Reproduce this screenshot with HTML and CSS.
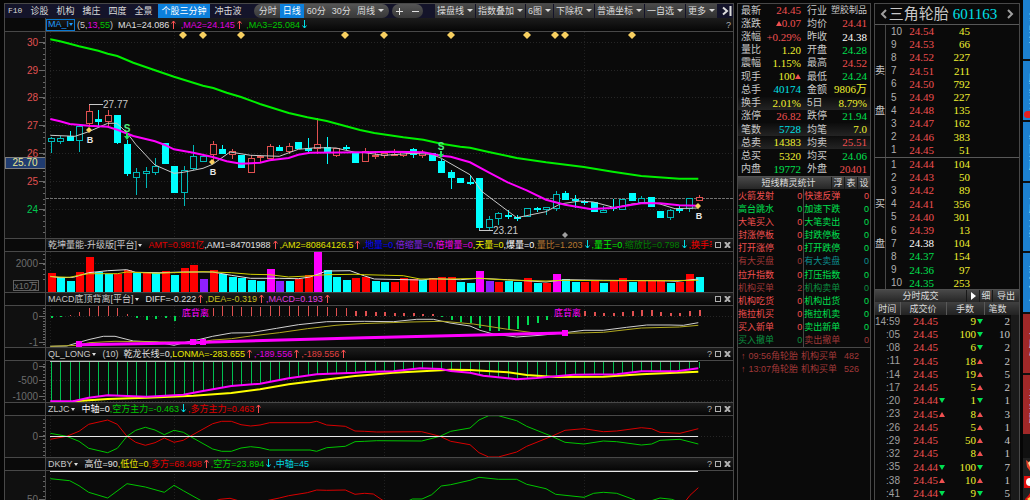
FILE: index.html
```html
<!DOCTYPE html>
<html lang="zh-CN">
<head>
<meta charset="utf-8">
<title>三角轮胎 601163</title>
<link rel="stylesheet" href="styles.css">
</head>
<body>
<div class="app">
  <main class="charts">
    <nav class="toolbar">
      <div class="tools">
        <button class="tool">F10</button>
        <button class="tool">诊股</button>
        <button class="tool">机构</button>
        <button class="tool">擒庄</button>
        <button class="tool">四度</button>
        <button class="tool">全景</button>
        <button class="tool tool-on">个股三分钟</button>
        <button class="tool">冲击波</button>
      </div>
      <div class="pill periods">
        <button class="period">分时</button>
        <button class="period period-on">日线</button>
        <button class="period">60分</button>
        <button class="period">30分</button>
        <button class="period">周线<i class="caret"></i></button>
      </div>
      <div class="pill zoomer">
        <button class="sign" aria-label="放大"><svg width="7" height="7"><path d="M0 3.5H7M3.5 0V7"/></svg></button>
        <button class="sign" aria-label="缩小"><svg width="7" height="7"><path d="M0 3.5H7"/></svg></button>
      </div>
      <div class="menus">
        <button class="menu">操盘线<i class="caret"></i></button>
        <button class="menu">指数叠加<i class="caret"></i></button>
        <button class="menu">6图<i class="caret"></i></button>
        <button class="menu">下除权<i class="caret"></i></button>
        <button class="menu">普通坐标<i class="caret"></i></button>
        <button class="menu">一自选<i class="caret"></i></button>
        <button class="menu">更多<i class="caret"></i></button>
      </div>
      <button class="last" aria-label="最后"><svg width="10" height="10"><path d="M1 1.500L5 5L1 8.500M8.500 0V10"/></svg></button>
    </nav>
    <div id="panels" class="panels"></div>
  </main>

  <section class="quote">
    <table class="stats"><tbody id="stats"></tbody></table>
    <div class="bar">
      <span class="bar-title">短线精灵统计</span>
      <button>浮</button><button>表</button><button>设</button>
    </div>
    <table class="alerts"><tbody id="alerts"></tbody></table>
    <ul class="log">
      <li>↑<span>09:56角轮胎</span><span>机构买单</span><b>482</b></li>
      <li>↑<span>13:07角轮胎</span><span>机构买单</span><b>526</b></li>
    </ul>
  </section>

  <section class="depth">
    <header class="stock">
      <button aria-label="上一只"><svg width="7" height="10"><path d="M6 1L2 5L6 9"/></svg></button>
      <h1>三角轮胎 <span>601163</span></h1>
      <button aria-label="下一只"><svg width="7" height="10"><path d="M1 1L5 5L1 9"/></svg></button>
    </header>
    <div class="book">
      <div class="side-name"><span>卖</span><span>盘</span></div>
      <table class="levels"><tbody id="asks"></tbody></table>
    </div>
    <div class="book book-buy">
      <div class="side-name"><span>买</span><span>盘</span></div>
      <table class="levels"><tbody id="bids"></tbody></table>
    </div>
    <div class="bar">
      <span class="bar-title">分时成交</span>
      <button aria-label="播放"><svg width="5" height="8"><path d="M0 0L5 4L0 8Z" fill="#fff"/></svg></button>
      <button>细</button><button class="wide">导出</button>
    </div>
    <div class="ticks">
      <table>
        <colgroup><col class="c-time"><col class="c-price"><col class="c-vol"><col class="c-num"></colgroup>
        <thead><tr><th>时间</th><th>成交价</th><th>手数</th><th>笔数</th></tr></thead>
        <tbody id="ticks"></tbody>
      </table>
    </div>
  </section>

  <aside class="dock">
    <button class="d58">实战培训</button>
    <button class="d58 badge">股友交流</button>
    <button class="d58">智能选股</button>
    <button class="d68">个股三分钟</button>
    <button class="d58">软件使用</button>
    <button class="d58 hot">个股心</button>
    <button class="d58 hot">主力追踪</button>
    <div class="dock-icons">
      <svg width="7" height="14"><path d="M3 2L7 5V13L4 9Z" fill="#e8402a"/><path d="M5 5L7 3V9Z" fill="#ffe0a0"/></svg>
      <svg width="7" height="14"><rect x="1" y="1" width="6" height="12" fill="#e01010"/><circle cx="7" cy="7" r="4" fill="#fff"/></svg>
      <svg width="7" height="14"><path d="M2 7L5 4L7 1V12L3 11Z" fill="#e01010"/><path d="M4 7L7 5V9Z" fill="#ffd24a"/></svg>
    </div>
  </aside>
</div>
<script src="app.js"></script>
</body>
</html>
```

FILE: styles.css
```css
* { box-sizing: border-box; }
body {
  margin: 0;
  background: #050505;
  color: #c8c8c8;
  font-family: "Liberation Sans", "Noto Sans CJK SC", sans-serif;
  font-size: 9px;
  line-height: 12px;
}
button {
  margin: 0; padding: 0; border: 0;
  background: none; color: inherit;
  font: inherit; white-space: nowrap; cursor: pointer;
}
table { border-collapse: collapse; border-spacing: 0; width: 100%; }
td, th { padding: 0; font-weight: normal; white-space: nowrap; }
svg { display: block; }

.app {
  display: grid;
  grid-template-columns: minmax(0, 1fr) 134px 146px 7px;
  column-gap: 3px;
  height: 100vh;
  padding-left: 4px;
  overflow: hidden;
}
.charts, .quote, .depth {
  margin-top: 3px;
  border: 1px solid #484848;
  border-bottom: 0;
  background: #0a0a0a;
  overflow: hidden;
}

.toolbar {
  display: flex; align-items: stretch;
  height: 14px;
  background: #14142a;
  color: #dcdcdc;
}
.tools { display: flex; margin-right: auto; }
.tool { padding: 0 4px; }
.tool:first-child { padding-left: 3px; font-family: "Liberation Mono", monospace; font-size: 8px; }
.tool-on { background: #0c80dc; color: #fff; margin: 0 1px 0 2px; padding: 0 3px; }
.pill { display: flex; border-radius: 7px; background: linear-gradient(#555, #383838); }
.periods { overflow: hidden; margin-right: 3px; }
.period { padding: 0 3px; }
.period:first-child { padding-left: 5px; }
.period:last-child { padding-right: 5px; }
.period-on { background: #0c80dc; color: #fff; }
.zoomer { align-items: center; gap: 9px; padding: 0 4px; }
.sign path { stroke: #e0e0e0; stroke-width: 1; }
.menus { display: flex; gap: 1px; margin: 0 4px 0 12px; }
.menu { padding: 0 2px; background: linear-gradient(#4a4a4a, #303030); }
.caret {
  display: inline-block; vertical-align: 2px;
  margin-left: 3px;
  border: 3px solid transparent; border-top-color: #ddd; border-bottom: 0;
}
.last { padding: 0 1px; }
.last path { fill: none; stroke: #ddd; stroke-width: 2; }

.head { display: flex; height: 14px; border: 1px solid #484848; border-width: 1px 0; }
.head-pad { flex: none; width: 41px; border-right: 1px solid #484848; }
.head-main {
  flex: 1; min-width: 0; display: flex; align-items: center;
  background: linear-gradient(#1c1c1c, #060606);
  padding-left: 2px;
}
.head-first { border-top: 0; }
.head-first .head-main { padding-left: 0; }
.legend { flex: 1; min-width: 0; display: flex; overflow: hidden; white-space: pre; }
.legend .caret { align-self: center; margin: 0 2px 0 1px; border-width: 3px 2px 0; }
.legend svg { flex: none; margin: 1px 2px 0 2px; }
.name-box { border: 1px solid #0a78d0; color: #1e9bff; padding: 0 1px; margin-right: 2px; display: flex; line-height: 9px; }
.name-box .caret { margin: 0; border-top-color: #1e9bff; }
.wins { flex: none; display: flex; gap: 3px; align-items: center; padding: 0 2px 0 3px; color: #b0b0b0; }
.wins svg path, .wins svg rect { fill: none; stroke: #b0b0b0; }
.plot { display: flex; }
.axis { flex: none; width: 41px; border-right: 1px solid #484848; background: #101010; }
.canvas { flex: 1; min-width: 0; }
.plot svg { overflow: hidden; shape-rendering: crispEdges; }
.plot polyline, .plot path { shape-rendering: auto; }
.plot text { font-family: "Liberation Sans", "Noto Sans CJK SC", sans-serif; font-size: 10px; }
.plot .note { font-size: 9px; }

.quote .stats { height: 172px; font-size: 10px; line-height: 13px; }
.stats td:nth-child(odd) { width: 26px; padding-left: 3px; line-height: 12px; }
.stats td:nth-child(even) { width: 40px; padding-right: 3px; text-align: right; }
.num { font-family: "Liberation Serif", "Noto Sans CJK SC", serif; font-size: 11px; line-height: 13px; }
.stats .small { font-size: 9px; padding-right: 3px; }
.stats .lit { background: linear-gradient(#0c0c0c, #242424); }

.bar {
  display: flex; height: 13px;
  background: linear-gradient(#484848, #262626);
  border-top: 1px solid #505050;
  color: #dcdcdc;
}
.bar-title { flex: 1; text-align: center; }
.bar button { width: 13px; border-left: 1px solid #181818; display: flex; align-items: center; justify-content: center; }
.quote .bar-title { text-indent: 8px; }
.bar .wide { width: 27px; }

.alerts { height: 159px; border-bottom: 1px solid #484848; }
.alerts td:nth-child(even) { text-align: right; padding-right: 1px; width: 28px; }
.alerts td:nth-child(2) { border-right: 1px solid #484848; }
.log { margin: 2px 0 0; padding: 0 3px; list-style: none; color: #a03838; line-height: 13px; }
.log li { display: flex; gap: 3px; }
.log b { font-weight: normal; margin-left: 4px; }

.r { color: #f05050; }
.g { color: #00e050; }
.y { color: #f0f030; }
.c { color: #00e0e8; }
.w { color: #fff; }
.s { color: #c8c8c8; }
.dr { color: #a03838; }
.dg { color: #0a9040; }
.dc { color: #0a9090; }

.stock {
  display: flex; align-items: center; justify-content: space-between;
  height: 21px; padding: 0 5px;
  border-bottom: 1px solid #585858;
}
.stock h1 { margin: 0; padding-right: 8px; font-size: 15px; line-height: 20px; font-weight: normal; }
.stock h1 span { color: #00e0e8; font-family: "Liberation Serif", serif; }
.stock path { fill: none; stroke: #a0a0a0; stroke-width: 2; }
.book { display: flex; height: 132px; }
.book-buy { border-top: 1px solid #585858; }
.side-name {
  width: 11px; border-right: 1px solid #484848;
  display: flex; flex-direction: column; justify-content: center; gap: 28px;
  font-size: 10px;
}
.levels { width: 84px; height: 132px; table-layout: fixed; }
.levels td { text-align: right; }
.levels td:first-child { text-align: left; padding-left: 5px; width: 18px; font-size: 10px; color: #b0b0b0; }
.levels td:nth-child(2) { width: 30px; }
.ticks { border-right: 8px solid #1a1a1a; }
.ticks table { table-layout: fixed; width: 144px; }
.c-time { width: 25px; }
.c-price { width: 46px; }
.c-vol { width: 38px; }
.c-num { width: 35px; }
.ticks th { height: 13px; line-height: 12px; background: linear-gradient(#404040, #222); border-right: 1px solid #585858; color: #dcdcdc; }
.ticks th:last-child { text-align: left; padding-left: 4px; }
.ticks td { height: 13px; text-align: right; }
.ticks tr:nth-child(4n) td { height: 14px; }
.ticks td:first-child { font-size: 10px; color: #a0a0a0; }
.ticks td:last-child { padding-right: 9px; }
.mark { display: inline-block; width: 7px; margin-left: 1px; text-align: left; }
.up, .down { display: inline-block; border: 3px solid transparent; vertical-align: 1px; }
.up { border-bottom: 5px solid #f05050; border-top: 0; }
.down { border-top: 5px solid #00e050; border-bottom: 0; }

.dock { display: flex; flex-direction: column; gap: 2px; background: #101010; overflow: hidden; }
.dock > button {
  position: relative; flex: none;
  padding-left: 5px; overflow: hidden;
  background: #1c80d0; color: #fff;
  writing-mode: vertical-lr; text-align: center; line-height: 9px;
}
.d58 { height: 59px; }
.d68 { height: 68px; }
.dock > .hot { background: #a02828; }
.badge::after {
  content: ""; position: absolute; left: 1px; bottom: 2px;
  width: 7px; height: 7px; border-radius: 4px 0 0 4px; background: #e82020;
}
.dock-icons { margin-top: 22px; display: flex; flex-direction: column; gap: 3px; background: #202020; }
```

FILE: app.js
```js
const $ = id => document.getElementById(id);
const RED = '#e05050', CYAN = '#00ffff', TEAL = '#00b8b8', MAG = '#ff00ff', GREEN = '#00f000';
const STEP = 9.53, FIRST = 4.5;
const cx = i => Math.round(FIRST + STEP * i);

const rect = (x, y, w, h, f, s) =>
  `<rect x="${x}" y="${y}" width="${w}" height="${h}" fill="${f}"${s ? ` stroke="${s}"` : ''}/>`;
const seg = (x1, y1, x2, y2, c, w = 1, dash = '') =>
  `<line x1="${x1}" y1="${y1}" x2="${x2}" y2="${y2}" stroke="${c}" stroke-width="${w}" stroke-dasharray="${dash}"/>`;
const text = (x, y, s, c, extra = '') => `<text x="${x}" y="${y}" fill="${c}" ${extra}>${s}</text>`;
const diamond = (x, y, c = '#f8d060', r = 4) => `<path d="M${x - r} ${y}L${x} ${y - r}L${x + r} ${y}L${x} ${y + r}Z" fill="${c}"/>`;

/* series are flat x,y lists in thirds of a pixel; base shifts them into the plot */
function line(list, base, color, width = 1) {
  let pts = '';
  for (let i = 0; i < list.length; i += 2) {
    pts += `${(list[i] / 3 - 46).toFixed(1)},${(list[i + 1] / 3 + base).toFixed(1)} `;
  }
  return `<polyline points="${pts}" fill="none" stroke="${color}" stroke-width="${width}"/>`;
}
function valueAt(list, x) {
  for (let i = 2; i < list.length; i += 2) {
    if (x <= list[i]) {
      const t = (x - list[i - 2]) / (list[i] - list[i - 2]);
      return list[i - 1] + t * (list[i + 1] - list[i - 1]);
    }
  }
  return list[list.length - 1];
}
const grid = (rows) =>
  rows.map(y => seg(4, y + .5, '100%', y + .5, '#262626', 1, '1 2')).join('') +
  [4, 128, 338, 538].map(x => seg(x + .5, 0, x + .5, '100%', '#202020', 1, '1 2')).join('');

/* kind: f filled, h hollow, r red hollow; then high, top, bottom, low */
const candles = `h52,55,65,99 h47,55,65,72 f33,49,62,62 h15,18,62,96 r-48,-27,13,21 f-30,-4,6,21 r-30,-15,7,21
f-15,-15,70,72 f60,73,162,168 h145,157,173,225 h141,154,163,204 h114,139,158,165 f69,69,131,131 f139,139,218,218
h138,149,218,259 h75,109,147,151 h104,109,127,127 r64,73,106,122 f76,87,101,101 r88,94,105,117 f106,106,143,143
r105,114,158,158 r105,109,112,125 r71,79,118,118 f75,81,94,94 r70,79,95,103 f67,67,88,88 f53,84,93,100
r-5,73,88,103 f52,80,100,132 r84,84,107,111 f76,80,87,90 f96,96,128,128 r84,92,125,125 r92,104,110,118
r98,100,109,115 r88,102,109,109 r92,92,107,110 f84,86,105,115 r90,95,108,115 f98,98,122,122 f118,124,158,158
f150,156,174,208 f174,174,189,189 f165,185,189,196 f175,175,325,331 h288,296,325,332 h276,280,297,315
f271,284,291,297 f284,291,297,303 h263,263,291,291 f261,264,268,276 h262,262,269,284 h214,222,268,272
f214,219,240,240 f224,236,243,263 f240,243,247,255 f245,245,275,275 h257,270,280,280 f238,260,264,272
h238,238,269,269 f219,219,243,243 h228,233,249,249 f230,230,261,261 f273,273,293,293 h267,271,293,299
f259,265,272,278 h235,235,268,275 r225,232,244,244`.split(/\s+/);

const ma3 = [151,-242,180,-236,209,-229,237,-221,295,-208,323,-199,352,-192,400,-172,465,-149,522,-130,609,-103,640,-96,680,-82,723,-69,780,-48,866,-21,922,-8,980,3,1080,30,1123,39,1210,52,1270,59,1324,71,1381,80,1410,83,1466,96,1550,114,1638,127,1752,141,1838,155,1924,168,2038,176,2095,176];
const ma2 = [151,-3,180,4,209,12,266,17,323,20,352,29,400,48,465,64,493,74,522,88,580,98,638,111,680,124,723,131,780,128,809,121,866,114,895,104,930,98,1094,97,1180,95,1270,97,1324,107,1352,110,1410,127,1466,157,1523,187,1580,211,1638,239,1695,254,1770,267,1838,264,1896,254,1924,250,1980,250,2038,256,2095,257];
const ma1 = [151,46,225,49,266,35,323,10,350,10,381,38,407,73,465,135,522,160,550,157,609,145,638,133,690,96,752,106,838,109,895,88,950,83,1008,84,1065,97,1094,98,1151,106,1180,104,1237,100,1295,103,1324,115,1410,164,1445,214,1550,293,1638,275,1680,252,1740,243,1780,246,1845,263,1896,252,1946,247,1980,252,2025,266,2095,264];

function drawPrice() {
  let s = grid([10, 38, 65, 93, 121, 149, 177]);
  s += seg(0, 166.5, '100%', 166.5, '#707070', 1, '3 1');
  candles.forEach((d, i) => {
    const k = d[0], [hi, top, bot, lo] = d.slice(1).split(',').map(v => Math.round(+v / 3 + 88));
    const x = cx(i), c = k === 'r' ? RED : k === 'f' ? CYAN : TEAL;
    if (top > hi) s += seg(x + .5, hi, x + .5, top, c);
    if (lo > bot) s += seg(x + .5, bot, x + .5, lo, c);
    s += k === 'f' ? rect(x - 3, top, 7, Math.max(2, bot - top), c)
      : rect(x - 2.5, top + .5, 6, Math.max(1, bot - top - 1), '#0a0a0a', c);
  });
  s += line(ma1, 88, '#c8c8c8') + line(ma2, 88, MAG, 2) + line(ma3, 88, GREEN, 2);
  [137, 157, 195, 299, 338, 405, 481, 509, 519, 586].forEach(x => s += diamond(x, 3));
  [[43, 98], [166, 130], [652, 174]].forEach(([x, y]) => {
    s += diamond(x, y, '#f8d060', 3) + text(x + 1, y + 13, 'B', '#e8e8e8', 'text-anchor="middle" class="note" font-weight="bold"');
  });
  [[81, 100], [395, 118]].forEach(([x, y]) => {
    s += text(x, y, 'S', '#50f080', 'text-anchor="middle" font-weight="bold"');
    s += `<path d="M${x - 1} ${y + 1}H${x + 1}V${y + 4}H${x + 3}L${x} ${y + 8}L${x - 3} ${y + 4}H${x - 1}Z" fill="#20e060"/>`;
  });
  s += seg(43, 72.5, 57, 72.5, '#c8c8c8') + text(57, 76, '27.77', '#c8c8c8');
  s += seg(433, 198.5, 447, 198.5, '#c8c8c8') + text(447, 202, '23.21', '#c8c8c8');
  s += diamond(519, 203, '#a0a0a0', 3);
  return s;
}

const vols = `R112 C123 C135 R107 R64 C108 C114 R114 R103 C110 R112 C112 R105 C116 R96 R88 P129 R102 C114 C123 C126 C132 C135
M100 P135 C135 R129 R118 M46 C103 C123 C131 R127 R123 C134 C138 R138 R127 R129 C131 R125 R124 R124 C138 C141 M105 P135
R137 C135 C138 R125 C141 R141 M114 C129 C138 R138 R136 C141 R132 R126 C138 R136 R136 R131 C141 R137 R114 C123`.split(/\s+/);
const volYellow = [151,122,209,124,237,118,266,113,352,113,380,108,470,112,550,109,609,107,694,110,752,115,809,116,866,123,922,120,980,116,1065,115,1094,116,1210,119,1260,129,1352,129,1437,127,1523,132,1638,135,1695,133,1810,134,1980,134,2095,133];
const volWhite = [151,121,180,125,220,124,266,110,323,104,380,101,407,109,480,110,550,108,638,108,694,118,752,127,838,127,895,128,930,123,980,105,1050,104,1094,120,1123,129,1266,132,1295,128,1381,131,1437,127,1523,131,1638,138,1695,131,1810,133,1980,134,2030,136,2095,129];
function drawVolume() {
  const col = { R: '#ff0000', C: CYAN, P: '#9020ff', M: MAG };
  let s = grid([11]);
  vols.forEach((d, i) => {
    const y = Math.round(+d.slice(1) / 3 - 16);
    s += rect(cx(i) - 3, y, 8, 40 - y, col[d[0]]);
  });
  return s + line(volWhite, -16, '#e0e0e0') + line(volYellow, -16, '#d0d000');
}

const macd = [246,242,237,228,215,211,208,216,233,246,252,248,246,254,244,243,243,216,211,208,212,212,212,208,209,208,208,208,208,213,217,217,226,226,228,229,231,230,231,233,234,243,251,257,262,276,284,285,282,279,268,261,251,243,243,243,226,229,231,232,228,225,221,222,228,231,232,224,222];
const diff = [151,331,200,330,240,318,270,310,310,301,345,301,400,315,470,318,522,328,560,318,600,310,638,301,694,291,752,290,830,277,895,266,980,257,1094,256,1180,257,1250,250,1300,250,1350,261,1410,270,1440,283,1480,294,1550,303,1620,298,1695,290,1752,283,1810,283,1880,274,1940,267,2010,267,2050,268,2095,260];
const dea = [151,331,237,328,266,320,345,316,500,318,590,320,638,312,694,308,752,300,838,290,922,278,1008,268,1080,263,1230,258,1330,256,1420,264,1523,280,1620,293,1695,292,1810,289,1924,276,2038,273,2095,268];
function drawMacd() {
  let s = grid([10]);
  macd.forEach((v, i) => {
    const y = Math.round(v / 3 - 70), up = v < 240, w = up && i < 32 ? 1 : 2;
    s += rect(cx(i), up ? y : 10, w, Math.max(1, Math.abs(y - 10)), up ? RED : '#00d850');
  });
  s += line(diff, -70, '#d0d0d0') + line(dea, -70, '#b0a820');
  s += line([237,326,580,320,638,318,1094,305,1695,291], -70, MAG, 3);
  [[33, 38], [147, 36], [157, 36], [519, 27]].forEach(([x, y]) => s += rect(x - 3, y - 3, 6, 6, MAG));
  return s + text(136, 10, '底背离', MAG, 'class="note"') + text(508, 10, '底背离', MAG, 'class="note"');
}

const qlM = [151,124,220,124,266,113,323,106,440,110,550,104,609,93,694,78,780,71,866,55,950,43,1065,38,1094,36,1180,34,1260,25,1324,27,1352,33,1410,38,1450,47,1550,58,1610,54,1667,49,1720,44,1850,43,1924,34,2030,34,2095,25];
const qlY = [220,124,323,117,440,113,580,107,694,99,780,88,866,73,950,62,1065,48,1094,46,1180,38,1352,29,1410,30,1523,37,1580,45,1667,51,1810,50,1924,43,2095,35];
function drawLong() {
  let s = grid([19, 40]) + seg(4, .5, 652, .5, '#c0c0c0');
  for (let i = 0; i < 69; i++) {
    const x = cx(i);
    s += seg(x + .5, 1, x + .5, Math.round(valueAt(qlM, (x + 46) * 3) / 3 - 1), '#00c050');
  }
  return s + line(qlY, -1, '#ffff00', 2) + line(qlM, -1, MAG, 2);
}

const zl = [151,238,200,229,237,214,266,193,323,180,352,193,381,229,407,247,436,256,465,248,493,234,522,247,550,241,570,229,638,191,665,184,694,184,723,194,752,198,780,195,809,188,930,188,950,184,980,195,1036,199,1065,213,1094,214,1130,216,1265,215,1320,229,1352,244,1410,254,1437,278,1466,291,1495,291,1550,276,1580,259,1655,229,1695,211,1752,206,1810,215,1850,213,1924,203,1955,206,1980,217,2040,220,2095,206];
function drawForce() {
  const mirror = zl.map((v, i) => i % 2 ? 458 - v : v);
  return grid([20]) + line(zl, -56, '#d80000') + line(mirror, -56, '#00c400') + seg(4, 20.5, 652, 20.5, '#e8e8e8');
}
function drawTrend() {
  return grid([]) + seg(4, .5, 652, .5, '#e8e8e8') +
    line([151,356,209,362,237,377,266,397,323,414,381,371,436,381,493,397,522,376,550,392,609,425], -111, '#00c400') +
    line([1220,425,1237,417,1266,417,1295,404,1324,378,1352,374,1410,361,1437,352,1495,358,1550,358,1580,373,1638,386,1667,403,1752,412,1781,400,1810,397,1850,400,1905,420], -111, '#00c400') +
    line([1945,425,1980,414,2015,418,2035,425], -111, '#00c400') +
    line([640,425,660,418,690,415,715,422], -111, '#d80000') +
    line([800,422,838,414,866,407,922,398,950,390,980,391,1036,390,1065,403,1094,400,1120,402,1150,422], -111, '#d80000') +
    line([2055,425,2070,406,2095,383], -111, '#d80000');
}

function axis(labels, from, to, gap) {
  let s = '';
  for (let y = from; y < to; y += gap) s += seg(38, Math.round(y) + .5, 40, Math.round(y) + .5, '#686868');
  labels.forEach(([t, y, c]) => {
    s += text(33, y + 4, t, c || '#6c6c6c', 'text-anchor="end"') + seg(34, y + .5, 40, y + .5, '#686868');
  });
  return s;
}

/* legend entries: [text, colour, arrow] */
const panels = [
  { h: 206, first: 1, wins: '?', draw: drawPrice,
    legend: [['(5,', '#c8c8c8'], ['13,', '#e000e0'], ['55', '#00c800'], [')  ', '#c8c8c8'], ['MA1=24.086', '#e0e0e0', 'u'], [' ,MA2=24.145', '#e000e0', 'u'], [' ,MA3=25.084', '#00c800', 'd']],
    axis: axis([['30', 10, RED], ['29', 38, RED], ['28', 65, RED], ['27', 93, RED], ['26', 121, RED], ['25', 149, RED], ['24', 177, '#00c850']], 5, 204, 5.57) +
      rect(0, 125, 40, 11, '#203c70', '#808080') + text(20, 134, '25.70', '#e8e890', 'text-anchor="middle"') },
  { h: 40, name: '乾坤量能-升级版[平台]', wins: '□×', draw: drawVolume,
    legend: [['  AMT=0.981亿', '#e00000'], [',AM1=84701988', '#e0e0e0', 'u'], [',AM2=80864126.5', '#e0e000', 'u'], [',地量=0', '#0000ff'], [',倍缩量=0', '#8020e0'], [',倍增量=0', '#f000f0'], [',天量=0', '#f0f000'], [',爆量=0', '#fff'], [',量比=1.203', '#b87830', 'd'], [',量王=0', '#00f000'], [',缩放比=0.798', '#008000', 'd'], [',换手率=', '#f00000']],
    axis: axis([['2000', 11]], 2, 28, 5) + rect(8.5, 28.5, 25, 10, '#101010', '#606060') + text(21, 37, 'x10万', '#707070', 'text-anchor="middle" class="note"') },
  { h: 41, name: 'MACD底顶背离[平台]', wins: '□×', draw: drawMacd,
    legend: [['  DIFF=-0.222', '#e0e0e0', 'u'], [',DEA=-0.319', '#c8c020', 'u'], [',MACD=0.193', '#e040e0', 'u']],
    axis: axis([['0', 10], ['-1', 36]], 2, 40, 2.6) },
  { h: 41, name: 'QL_LONG', wins: '?□×', draw: drawLong,
    legend: [['  (10)  ', '#c8c8c8'], ['乾龙长线=0,', '#e0e0e0'], ['LONMA=-283.655', '#e8e800', 'u'], [',-189.556', '#e000e0', 'u'], [',-189.556', '#e04040', 'u']],
    axis: axis([['0', 5], ['-500', 19], ['-1000', 35]], 3, 40, 3.2) },
  { h: 41, name: 'ZLJC', wins: '?□×', draw: drawForce,
    legend: [['  中轴=0', '#fff'], [',空方主力=-0.463', '#00c800', 'd'], [',多方主力=0.463', '#e00000', 'u']],
    axis: axis([['0', 20]], 3, 40, 4) },
  { h: 41, name: 'DKBY', wins: '?□×', draw: drawTrend,
    legend: [['  高位=90', '#e0e0e0'], [',低位=0', '#e8e800'], [',多方=68.498', '#e00000', 'u'], [',空方=23.894', '#00c800', 'd'], [',中轴=45', '#00d8e0']],
    axis: axis([['50', 28]], 5, 40, 5) }
];

const arrow = k => k === 'u'
  ? '<svg width="5" height="9"><path d="M2.5 9V1M.5 3.500L2.500 1L4.500 3.500" fill="none" stroke="#ff5050"/></svg>'
  : '<svg width="5" height="9"><path d="M2.5 0V8M.5 5.500L2.500 8L4.500 5.500" fill="none" stroke="#00e0e8"/></svg>';
const winIcon = {
  '?': '<button>?</button>',
  '□': '<button aria-label="最大化"><svg width="6" height="6"><rect x=".5" y=".5" width="5" height="5"/></svg></button>',
  '×': '<button aria-label="关闭"><svg width="7" height="6"><path d="M1 0L6 6M6 0L1 6" stroke-width="2"/></svg></button>'
};
$('panels').innerHTML = panels.map(p => `
  <div class="head${p.first ? ' head-first' : ''}"><div class="head-pad"></div><div class="head-main">
    <div class="legend">${p.first ? '<button class="name-box">MA_I<i class="caret"></i></button>' : `<button>${p.name}</button><i class="caret"></i>`}${
      p.legend.map(([t, c, a]) => `<span style="color:${c}">${t}</span>${a ? arrow(a) : ''}`).join('')}</div>
    <div class="wins">${[...p.wins].map(w => winIcon[w]).join('')}</div>
  </div></div>
  <div class="plot"><div class="axis"><svg width="40" height="${p.h}">${p.axis}</svg></div>
    <div class="canvas"><svg width="100%" height="${p.h}">${p.draw()}</svg></div></div>`).join('');

const tri = k => `<i class="${k === 'u' ? 'up' : 'down'}"></i>`;
$('stats').innerHTML = [
  ['最新', '24.45', 'r', '行业', '塑胶制品', 's small'], ['涨跌', tri('u') + '0.07', 'r', '均价', '24.41', 'r'],
  ['涨幅', '+0.29%', 'r', '昨收', '24.38', 'w'], ['量比', '1.20', 'y', '开盘', '24.28', 'g'],
  ['震幅', '1.15%', 'y', '最高', '24.52', 'r'], ['现手', '100' + tri('u'), 'y', '最低', '24.24', 'g'],
  ['总手', '40174', 'c', '金额', '9806万', 'y'], ['换手', '2.01%', 'y', '5日', '8.79%', 'y', 1],
  ['涨停', '26.82', 'r', '跌停', '21.94', 'g'], ['笔数', '5728', 'c', '均笔', '7.0', 'y', 1],
  ['总卖', '14383', 'y', '均卖', '25.51', 'r', 1], ['总买', '5320', 'y', '均买', '24.06', 'g'],
  ['内盘', '19772', 'g', '外盘', '20401', 'r']
].map(r => `<tr${r[6] ? ' class="lit"' : ''}><td>${r[0]}</td><td class="num ${r[2]}">${r[1]}</td><td>${r[3]}</td><td class="num ${r[5]}">${r[4]}</td></tr>`).join('');

$('alerts').innerHTML = [
  ['火箭发射', 0, 'r', '快速反弹', 'r'], ['高台跳水', 0, 'g', '加速下跌', 'g'], ['大笔买入', 0, 'r', '大笔卖出', 'g'],
  ['封涨停板', 0, 'r', '封跌停板', 'g'], ['打开涨停', 0, 'r', '打开跌停', 'g'], ['有大买盘', 0, 'dr', '有大卖盘', 'dc'],
  ['拉升指数', 0, 'r', '打压指数', 'g'], ['机构买单', 2, 'dr', '机构卖单', 'dg'], ['机构吃货', 0, 'r', '机构出货', 'g'],
  ['拖拉机买', 0, 'r', '拖拉机卖', 'g'], ['买入新单', 0, 'r', '卖出新单', 'g'], ['买入撤单', 0, 'dg', '卖出撤单', 'dr']
].map(r => `<tr><td class="${r[2]}">${r[0]}</td><td class="${r[2]}">${r[1]}</td><td class="${r[4]}">${r[3]}</td><td class="${r[4]}">0</td></tr>`).join('');

const level = (n, cents, v) => {
  const c = cents > 2438 ? 'r' : cents < 2438 ? 'g' : 'w';
  return `<tr><td>${n}</td><td class="num ${c}">${(cents / 100).toFixed(2)}</td><td class="num y">${v}</td></tr>`;
};
$('asks').innerHTML = [45, 66, 227, 211, 792, 227, 135, 162, 383, 51].map((v, i) => level(10 - i, 2454 - i, v)).join('');
$('bids').innerHTML = [104, 50, 89, 356, 301, 13, 104, 154, 97, 253].map((v, i) => level(i + 1, 2444 - i, v)).join('');

$('ticks').innerHTML = [
  ['14:59', '24.45', '', 9, 'd', 2], [':05', '24.45', '', 100, 'd', 10], [':08', '24.45', '', 6, 'd', 2],
  [':11', '24.45', '', 18, 'u', 2], [':14', '24.45', '', 19, 'u', 5], [':17', '24.45', '', 5, 'u', 2],
  [':20', '24.44', 'd', 1, 'd', 1], [':23', '24.45', 'u', 8, 'u', 3], [':26', '24.45', '', 5, 'u', 1],
  [':29', '24.45', '', 50, 'u', 4], [':32', '24.45', '', 8, 'u', 1], [':35', '24.44', 'd', 100, 'd', 7],
  [':38', '24.45', 'u', 10, 'u', 1], [':41', '24.44', 'd', 9, 'd', 5]
].map(r => `<tr><td>${r[0]}</td><td class="num r">${r[1]}<span class="mark">${r[2] ? tri(r[2]) : ''}</span></td><td class="num y">${r[3]}<span class="mark">${tri(r[4])}</span></td><td class="num s">${r[5]}</td></tr>`).join('');
```
